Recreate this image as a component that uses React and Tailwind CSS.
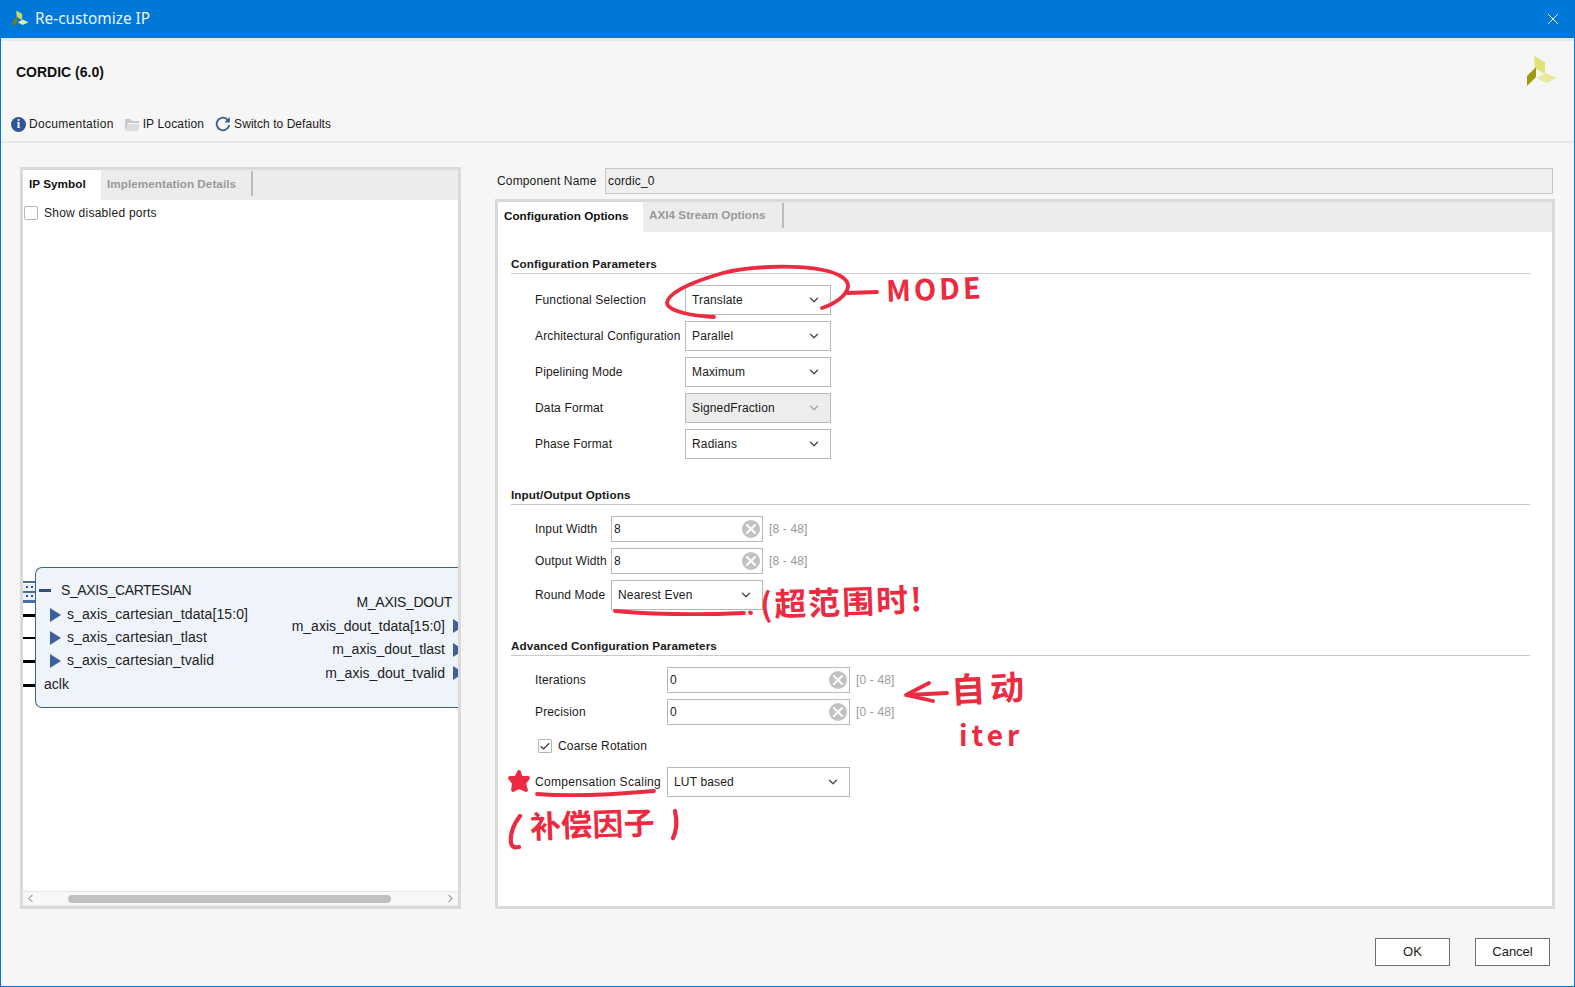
import { ChevronDown, ChevronLeft, ChevronRight, Check, X } from 'lucide-react'

const hand = { fontFamily: '"Noto Sans CJK SC", sans-serif' }

function Logo({ className, colors }) {
  return (
    <svg viewBox="0 0 32 32" className={className}>
      <polygon points="8,1 19,7 19,19 9,13" fill={colors[0]} />
      <polygon points="1,21 10,12 10,22 1,31" fill={colors[1]} />
      <polygon points="11,23 20,18 31,23 20,28" fill={colors[2]} />
    </svg>
  )
}

function Select({ value, width, disabled, pad = 'pl-[6px]', chevron = 'pr-[9px]' }) {
  return (
    <div className={`${width} h-[30px] flex items-center justify-between border border-[#b9b9b9] ${pad} ${chevron} ${disabled ? 'bg-[#ededed]' : 'bg-white'}`}>
      <span>{value}</span>
      <ChevronDown size={14} strokeWidth={2.6} className={disabled ? 'text-[#a8a8a8]' : 'text-[#555]'} />
    </div>
  )
}

function NumberInput({ value, width, range }) {
  return (
    <div className="flex items-center">
      <div className={`${width} h-[26px] flex items-center justify-between border border-[#b9b9b9] bg-white pl-[2px] pr-[2px]`}>
        <span>{value}</span>
        <span className="w-[18px] h-[18px] rounded-full bg-[#c2c2c2] flex items-center justify-center">
          <X size={16} strokeWidth={3} className="text-white" />
        </span>
      </div>
      <span className="ml-[6px] text-[#999]">{range}</span>
    </div>
  )
}

function Heading({ children, className = '' }) {
  return <div className={`h-[18px] leading-[15px] border-b border-[#c9c9c9] font-bold text-[11.7px] tracking-[0.1px] ${className}`}>{children}</div>
}

function Row({ label, labelWidth, children }) {
  return (
    <div className="flex items-center">
      <div className={`${labelWidth} whitespace-nowrap`}>{label}</div>
      {children}
    </div>
  )
}

function PortIn({ children }) {
  return (
    <div className="h-[23px] flex items-center text-[14px] tracking-[0.1px]">
      <svg width="11" height="14" viewBox="0 0 11 14" className="mr-[6px]"><polygon points="0,0 11,7 0,14" fill="#3d5f9c" /></svg>
      {children}
    </div>
  )
}

function PortOut({ children }) {
  return (
    <div className="h-[23.5px] flex items-center justify-end text-[14px] relative">
      {children}
      <svg width="11" height="14" viewBox="0 0 11 14" className="ml-[8px] -mr-[12px] shrink-0"><polygon points="0,0 11,7 0,14" fill="#3d5f9c" /></svg>
    </div>
  )
}

export default function App() {
  return (
    <div className="relative w-[1575px] h-[987px] overflow-hidden flex flex-col bg-[#f6f6f6] border-x border-b border-[#0078d7] text-[12px] tracking-[0.15px] text-[#1a1a1a]" style={{ fontFamily: '"Liberation Sans", Arial, sans-serif' }}>

      {/* title bar */}
      <div className="-mx-px h-[38px] shrink-0 bg-[#0078d7] flex items-center justify-between pl-[12px] pr-[13px] text-[#eaf4fc]">
        <div className="flex items-center">
          <Logo className="w-[17px] h-[17px] mr-[6px]" colors={['#cbd96a', '#6f7d1e', '#dfeeb0']} />
          <span className="text-[15.4px] tracking-normal" style={{ fontFamily: '"Noto Sans", sans-serif' }}>Re-customize IP</span>
        </div>
        <X size={18} strokeWidth={1.3} className="text-white" />
      </div>

      {/* header */}
      <div className="h-[105px] shrink-0 border-t-[3px] border-b-2 border-[#e8e8e8] flex flex-col relative">
        <div className="h-[62px] pl-[15px] flex items-center font-bold text-[14px] tracking-normal text-[#111]">CORDIC (6.0)</div>
        <div className="flex items-center pl-[10px] mt-[9px] h-[24px]">
          <span className="w-[15px] h-[15px] rounded-full bg-[#2f5597] text-white flex items-center justify-center text-[12px] font-bold mr-[3px]" style={{ fontFamily: '"Liberation Serif", serif' }}>i</span>
          <span className="tracking-[0.3px]">Documentation</span>
          <svg width="15" height="13" viewBox="0 0 15 13" className="ml-[11px] mr-[3px]">
            <path d="M0 1h5l2 2h7v2H3L1 12H0z" fill="#c9c9c9" />
            <path d="M3 6h12l-2 7H1z" fill="#dcdcdc" />
          </svg>
          <span>IP Location</span>
          <svg width="16" height="16" viewBox="0 0 16 16" className="ml-[11px] mr-[3px]" fill="none">
            <path d="M13 4.2A6.3 6.3 0 1 0 14.2 9" stroke="#3a5a94" strokeWidth="1.8" />
            <polygon points="14.8,1 14.8,6.6 9.4,6.6" fill="#3a5a94" />
          </svg>
          <span className="tracking-[0.05px]">Switch to Defaults</span>
        </div>
        <Logo className="absolute right-[16px] top-[14px] w-[32px] h-[32px]" colors={['#e2e272', '#a09a12', '#e9e99c']} />
      </div>

      {/* body */}
      <div className="flex pl-[19px] pr-[19px] pt-[24px] gap-[34px]">

        {/* left panel */}
        <div className="w-[441px] h-[742px] shrink-0 border-[3px] border-[#dadada] bg-white flex flex-col">
          <div className="h-[30px] shrink-0 bg-[#ececec] flex font-bold text-[11.7px] tracking-[0.05px]">
            <div className="w-[78px] bg-white pl-[6px] pb-[2px] flex items-center text-[#111]">IP Symbol</div>
            <div className="w-[152px] pl-[6px] flex items-center text-[#9a9a9a] border-r-2 border-[#bcbcbc] h-[25px] mt-[1px]">Implementation Details</div>
          </div>
          <div className="flex items-center pl-[1px] h-[23px] mt-[1px]">
            <span className="w-[14px] h-[14px] rounded-[2px] border border-[#b5b5b5] mr-[6px]" />
            <span className="tracking-[0.25px]">Show disabled ports</span>
          </div>

          {/* ip symbol block */}
          <div className="flex-1 relative overflow-hidden pt-[343px] text-[#222] tracking-normal">
            <div className="ml-[12px] h-[141px] rounded-l-[7px] border border-r-0 border-[#3f628f] bg-[#eff4fb] flex justify-between relative">
              <div className="pt-[10px]">
                <div className="h-[24px] mb-[1px] flex items-center text-[14px] tracking-[-0.4px] pl-[25px]">S_AXIS_CARTESIAN</div>
                <div className="pl-[14px]">
                  <PortIn>s_axis_cartesian_tdata[15:0]</PortIn>
                  <PortIn>s_axis_cartesian_tlast</PortIn>
                  <PortIn>s_axis_cartesian_tvalid</PortIn>
                </div>
                <div className="h-[24px] flex items-center text-[14px] pl-[8px]">aclk</div>
              </div>
              <div className="pt-[23px] pr-[6px] flex flex-col items-end">
                <div className="h-[23.5px] flex items-center text-[14px] tracking-[-0.3px] mr-[0px]">M_AXIS_DOUT</div>
                <PortOut>m_axis_dout_tdata[15:0]</PortOut>
                <PortOut>m_axis_dout_tlast</PortOut>
                <PortOut>m_axis_dout_tvalid</PortOut>
              </div>
            </div>

            {/* pins */}
            <svg width="12" height="22" viewBox="0 0 12 22" className="absolute left-0 top-[357px]">
              <rect x="0" y="0" width="12" height="2" fill="#4a6fa5" />
              <rect x="0" y="3" width="12" height="7" fill="#eef2f8" />
              <rect x="3" y="5" width="2" height="2" fill="#33527f" />
              <rect x="8" y="5" width="2" height="2" fill="#33527f" />
              <rect x="0" y="10" width="12" height="2" fill="#4a6fa5" />
              <rect x="0" y="12" width="12" height="7" fill="#eef2f8" />
              <rect x="3" y="14" width="2" height="2" fill="#33527f" />
              <rect x="8" y="14" width="2" height="2" fill="#33527f" />
              <rect x="0" y="19" width="12" height="3" fill="#4a6fa5" />
            </svg>
            <div className="absolute left-[16px] top-[365px] w-[12px] h-[3px] bg-[#2f4f86]" />
            <div className="absolute left-0 top-[390px] w-[12px] h-[3px] bg-black" />
            <div className="absolute left-0 top-[413px] w-[12px] h-[2px] bg-black" />
            <div className="absolute left-0 top-[436px] w-[12px] h-[3px] bg-black" />
            <div className="absolute left-0 top-[460px] w-[12px] h-[3px] bg-black" />
          </div>

          {/* scrollbar */}
          <div className="h-[14px] shrink-0 bg-[#f8f8f8] border-t border-[#e6e6e6] flex items-center justify-between px-[1px] text-[#666] relative">
            <ChevronLeft size={13} strokeWidth={1.8} />
            <div className="absolute left-[45px] w-[323px] h-[8px] rounded-[4px] bg-[#c0c0c0]" />
            <ChevronRight size={13} strokeWidth={1.8} />
          </div>
          <div className="h-[1px] shrink-0 bg-[#ebebeb]" />
        </div>

        {/* right column */}
        <div className="w-[1060px] shrink-0 flex flex-col">
          <div className="flex items-center h-[26px] mt-[1px] mb-[5px]">
            <div className="w-[110px] pl-[2px]">Component Name</div>
            <div className="w-[948px] h-[26px] bg-[#efefef] border border-[#c6c6c6] pl-[2px] flex items-center">cordic_0</div>
          </div>
          <div className="h-[710px] border-[3px] border-[#dadada] bg-white flex flex-col">
            <div className="h-[30px] shrink-0 bg-[#ececec] flex font-bold text-[11.7px] tracking-[0.02px]">
              <div className="w-[145px] bg-white pl-[6px] pb-[2px] flex items-center text-[#111]">Configuration Options</div>
              <div className="w-[141px] pl-[6px] pb-[1px] flex items-center text-[#9a9a9a] border-r-2 border-[#bcbcbc] h-[25px] mt-[1px]">AXI4 Stream Options</div>
            </div>

            <div className="pl-[13px] pr-[22px] pt-[24px] flex flex-col">
              <Heading>Configuration Parameters</Heading>
              <div className="pl-[24px] mt-[11px] flex flex-col gap-[6px]">
                <Row label="Functional Selection" labelWidth="w-[150px]"><Select value="Translate" width="w-[146px]" /></Row>
                <Row label="Architectural Configuration" labelWidth="w-[150px]"><Select value="Parallel" width="w-[146px]" /></Row>
                <Row label="Pipelining Mode" labelWidth="w-[150px]"><Select value="Maximum" width="w-[146px]" /></Row>
                <Row label="Data Format" labelWidth="w-[150px]"><Select value="SignedFraction" width="w-[146px]" disabled /></Row>
                <Row label="Phase Format" labelWidth="w-[150px]"><Select value="Radians" width="w-[146px]" /></Row>
              </div>

              <Heading className="mt-[28px]">Input/Output Options</Heading>
              <div className="pl-[24px] mt-[11px] flex flex-col gap-[6px]">
                <Row label="Input Width" labelWidth="w-[76px]"><NumberInput value="8" width="w-[152px]" range="[8 - 48]" /></Row>
                <Row label="Output Width" labelWidth="w-[76px]"><NumberInput value="8" width="w-[152px]" range="[8 - 48]" /></Row>
                <Row label="Round Mode" labelWidth="w-[76px]"><Select value="Nearest Even" width="w-[152px]" pad="pl-[6px]" /></Row>
              </div>

              <Heading className="mt-[28px]">Advanced Configuration Parameters</Heading>
              <div className="pl-[24px] mt-[11px] flex flex-col gap-[6px]">
                <Row label="Iterations" labelWidth="w-[132px]"><NumberInput value="0" width="w-[183px]" range="[0 - 48]" /></Row>
                <Row label="Precision" labelWidth="w-[132px]"><NumberInput value="0" width="w-[183px]" range="[0 - 48]" /></Row>
              </div>
              <div className="pl-[27px] mt-[14px] flex items-center h-[14px]">
                <span className="w-[14px] h-[14px] border border-[#b5b5b5] rounded-[1px] flex items-center justify-center mr-[6px]">
                  <Check size={13} strokeWidth={2.2} className="text-[#333]" />
                </span>
                Coarse Rotation
              </div>
              <div className="pl-[24px] mt-[14px]">
                <Row label={<span className="tracking-[0.3px]">Compensation Scaling</span>} labelWidth="w-[132px]"><Select value="LUT based" width="w-[183px]" /></Row>
              </div>
            </div>
          </div>
        </div>
      </div>

      {/* footer buttons */}
      <div className="flex justify-end gap-[25px] pr-[24px] mt-[29px] text-[13px] tracking-normal">
        <button className="w-[75px] h-[28px] bg-white border border-[#707070]">OK</button>
        <button className="w-[75px] h-[28px] bg-white border border-[#707070]">Cancel</button>
      </div>

      {/* red pen annotations */}
      <svg className="absolute -left-px top-0 pointer-events-none" width="1575" height="987" fill="none" stroke="#ec2a40" strokeWidth="3.8" strokeLinecap="round" strokeLinejoin="round">
        <path d="M714 317C695 316 668 312 667 303C668 292 695 281 723 273C745 267 790 264 823 270C838 273 849 279 848 287C847 295 835 304 822 308" />
        <path d="M848 293L877 292" />
        <path d="M615 611C650 614 700 615 744 613" />
        <path d="M750 612.500L751 613" />
        <path d="M947 693L908 695" />
        <path d="M929 683L906 695L933 701" />
        <path d="M537 794C575 797 620 794 654 791" />
        <path d="M519 772L521 778L528 778L524 783L526 790L519 787L513 790L514 783L510 778L516 778Z" fill="#ec2a40" />
        <path d="M520 816C513 825 510 835 511 843C512 847 515 848 519 847" strokeWidth="4.2" />
        <path d="M675 811C677 820 677 830 673 838" strokeWidth="4.2" />
      </svg>
      <div className="absolute left-[885px] top-[269px] text-[29px] leading-[36px] font-bold tracking-[3px] text-[#ec2a40] -rotate-2" style={hand}>MODE</div>
      <div className="absolute left-[759px] top-[579px] text-[32px] leading-[42px] tracking-[2px] font-bold text-[#ec2a40] -rotate-2 whitespace-nowrap" style={hand}>(超范围时!</div>
      <div className="absolute left-[950px] top-[668px] text-[34px] leading-[38px] tracking-[5px] font-bold text-[#ec2a40] -rotate-3 whitespace-nowrap" style={hand}>自动</div>
      <div className="absolute left-[958px] top-[720px] text-[28px] leading-[28px] font-bold tracking-[4px] text-[#ec2a40] whitespace-nowrap" style={hand}>iter</div>
      <div className="absolute left-[529px] top-[802px] text-[31px] leading-[42px] text-[#ec2a40] font-bold -rotate-2 whitespace-nowrap" style={hand}>补偿因子</div>
    </div>
  )
}
